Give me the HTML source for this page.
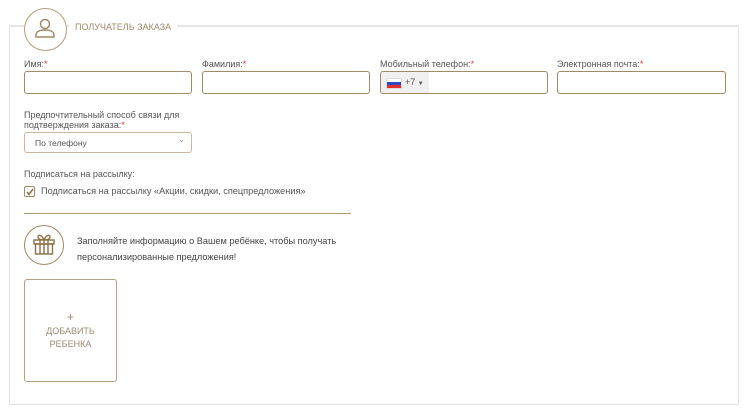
<!DOCTYPE html>
<html><head><meta charset="utf-8"><style>
body{margin:0;width:752px;height:417px;background:#fff;font-family:"Liberation Sans",sans-serif;position:relative;overflow:hidden;color:#333}
.a{position:absolute}
.frame{left:9px;top:25px;width:728px;height:377px;border:1px solid #e2e2e2;border-top:2px solid #e6e6e6}
.lbl{font-size:9px;color:#555}
.lbl i{color:#e33;font-style:normal}
.inp{height:23px;border:1px solid #a08a68;border-radius:3px;box-sizing:border-box}
</style></head><body>
<div class="a frame"></div>
<div class="a" style="left:24px;top:8px;width:41px;height:41px;border:1px solid #b39f7e;border-radius:50%;background:#fff"></div>
<svg class="a" style="left:34px;top:17px" width="22" height="22" viewBox="0 0 22 22" fill="none" stroke="#a08a68" stroke-width="1.5"><circle cx="11" cy="7" r="4.5"/><path d="M2 20v-2c0-3 3-5 9-5s9 2 9 5v2z"/></svg>
<div class="a" style="left:69px;top:20px;background:#fff;padding:0 6px;font-size:9px;color:#a08a68;line-height:14px">ПОЛУЧАТЕЛЬ ЗАКАЗА</div>

<div class="a lbl" style="left:24px;top:59px">Имя:<i>*</i></div>
<div class="a lbl" style="left:202px;top:59px">Фамилия:<i>*</i></div>
<div class="a lbl" style="left:380px;top:59px">Мобильный телефон:<i>*</i></div>
<div class="a lbl" style="left:557px;top:59px">Электронная почта:<i>*</i></div>
<div class="a inp" style="left:24px;top:71px;width:168px"></div>
<div class="a inp" style="left:202px;top:71px;width:168px"></div>
<div class="a inp" style="left:380px;top:71px;width:168px;overflow:hidden"><div style="position:absolute;left:0;top:0;width:48px;height:21px;background:#f0f0f0"></div>
<div style="position:absolute;left:6px;top:7px;width:14px;height:9px;background:linear-gradient(#fff 33%,#2f49c0 33% 66%,#e0302d 66%);box-shadow:0 0 0 0.5px #ccc"></div>
<div style="position:absolute;left:24px;top:5px;font-size:9px;color:#555">+7 <span style="font-size:6px">▼</span></div></div>
<div class="a inp" style="left:557px;top:71px;width:169px"></div>

<div class="a lbl" style="left:24px;top:110px;line-height:10px">Предпочтительный способ связи для<br>подтверждения заказа:<i>*</i></div>
<div class="a inp" style="left:24px;top:132px;width:168px;height:21px;border-color:#c9b99d"><span style="position:absolute;left:10px;top:5px;font-size:8.5px;color:#555">По телефону</span><span style="position:absolute;right:6px;top:2px;font-size:8px;color:#888">⌄</span></div>

<div class="a lbl" style="left:24px;top:169px">Подписаться на рассылку:</div>
<div class="a" style="left:24px;top:186px;width:11px;height:11px;border:1px solid #a08a68;border-radius:2px;box-sizing:border-box"></div>
<svg class="a" style="left:25px;top:187px" width="10" height="10" viewBox="0 0 10 10" fill="none" stroke="#8a6f45" stroke-width="1.5"><path d="M2 5l2 2.5 4-5.5"/></svg>
<div class="a lbl" style="left:41px;top:186px;font-size:9.2px">Подписаться на рассылку «Акции, скидки, спецпредложения»</div>

<div class="a" style="left:24px;top:213px;width:327px;height:1px;background:#b09a76"></div>
<div class="a" style="left:24px;top:225px;width:40px;height:40px;border:1px solid #a08a68;border-radius:50%;box-sizing:border-box"></div>
<svg class="a" style="left:32px;top:232px" width="24" height="24" viewBox="0 0 24 24" fill="none" stroke="#8a6f45" stroke-width="1.4"><rect x="2" y="8" width="20" height="4"/><rect x="3.5" y="12" width="17" height="10"/><path d="M12 8v14M8 8v14M16 8v14M12 8C10 3 6 2 6 5s6 3 6 3M12 8c2-5 6-6 6-3s-6 3-6 3"/></svg>
<div class="a" style="left:77px;top:233px;font-size:9.2px;line-height:16px;color:#444">Заполняйте информацию о Вашем ребёнке, чтобы получать<br>персонализированные предложения!</div>

<div class="a" style="left:24px;top:279px;width:93px;height:103px;border:1px solid #b3a283;border-radius:3px;box-sizing:border-box;text-align:center;font-size:9px;color:#9a8a70;line-height:13px;padding-top:31px"><span style="font-size:12px">+</span><br>ДОБАВИТЬ<br>РЕБЕНКА</div>
</body></html>
